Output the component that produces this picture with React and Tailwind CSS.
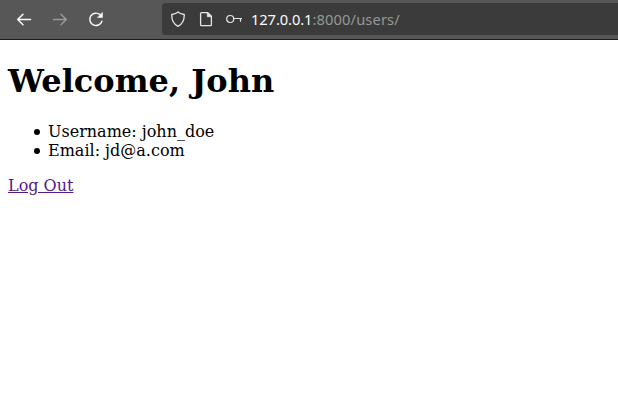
function Toolbar() {
  return (
    <header className="flex h-10 shrink-0 items-center border-b border-[#1c1b22] bg-[#575757] pb-px pl-4 text-[#fbfbfe]">
      <svg className="size-4" viewBox="0 0 16 16" fill="none" stroke="currentColor" strokeWidth="1.5" strokeLinecap="round" strokeLinejoin="round">
        <path d="M14.500 8.500H2M7 3.200 1.700 8.500 7 13.800" />
      </svg>
      <svg className="ml-5 size-4 text-[#989898]" viewBox="0 0 16 16" fill="none" stroke="currentColor" strokeWidth="1.5" strokeLinecap="round" strokeLinejoin="round">
        <path d="M1.500 8.500H14M9 3.200l5.300 5.300L9 13.800" />
      </svg>
      <svg className="ml-5 size-4" viewBox="0 0 16 16" fill="none" stroke="currentColor" strokeWidth="1.4" strokeLinecap="round" strokeLinejoin="round">
        <path d="M13.900 10.200A6.200 6.200 0 1 1 12 3.600" />
        <path d="M14.500 1.500v5H9.600z" fill="currentColor" strokeWidth="0.5" />
      </svg>
      <div className="ml-[58px] flex h-8 flex-1 items-center rounded-l bg-[#3b3b3b] pl-2">
        <svg className="size-4 text-[#e6e6e8]" viewBox="0 0 16 16" fill="none" stroke="currentColor" strokeWidth="1.3" strokeLinejoin="round">
          <path d="M8 .9C9.500 2.300 11.800 3 14.200 3.500c.3 5.500-1.600 9.500-6.200 11.900C3.400 13 1.500 9 1.800 3.500 4.200 3 6.500 2.300 8 .9z" />
        </svg>
        <svg className="ml-3 size-4 text-[#e6e6e8]" viewBox="0 0 16 16" fill="none" stroke="currentColor" strokeWidth="1.3" strokeLinejoin="round">
          <path d="M3.600 1.600h6.200l3.600 3.600v8.500a1 1 0 0 1-1 1H3.600a1 1 0 0 1-1-1V2.600a1 1 0 0 1 1-1z" />
          <path d="M9.300 1.600v4.100h4.100z" fill="currentColor" strokeWidth="0.8" />
        </svg>
        <svg className="ml-3 size-4 text-[#e6e6e8]" viewBox="0 0 16 16" fill="none" stroke="currentColor" strokeWidth="1.2">
          <circle cx="4.200" cy="8" r="3.500" />
          <path d="M7.700 7.500H16M14.500 7.500v3.200" />
        </svg>
        <span className="ml-[9px] font-['Noto_Sans',sans-serif] text-[14.67px] leading-5">
          <span className="tracking-[-0.08px]">127.0.0.1</span>
          <span className="tracking-[0.14px] text-[#979797]">:8000/users/</span>
        </span>
      </div>
    </header>
  );
}

function Item({ children }) {
  return (
    <li className="flex items-center">
      <span className="mr-2 size-1.5 rounded-full bg-black" />
      {children}
    </li>
  );
}

export default function App() {
  return (
    <div className="flex h-screen flex-col overflow-hidden bg-white">
      <Toolbar />
      <main className="px-2 pt-[22px] font-['DejaVu_Serif',serif] text-base leading-[19px] text-black">
        <h1 className="text-[32px] leading-[38px] font-bold">Welcome, John</h1>
        <ul className="mt-[22px] pl-[26px]">
          <Item>Username: john_doe</Item>
          <Item>Email: jd@a.com</Item>
        </ul>
        <p className="mt-4"><a className="text-[#551a8b] underline" href="#logout">Log Out</a></p>
      </main>
    </div>
  );
}
